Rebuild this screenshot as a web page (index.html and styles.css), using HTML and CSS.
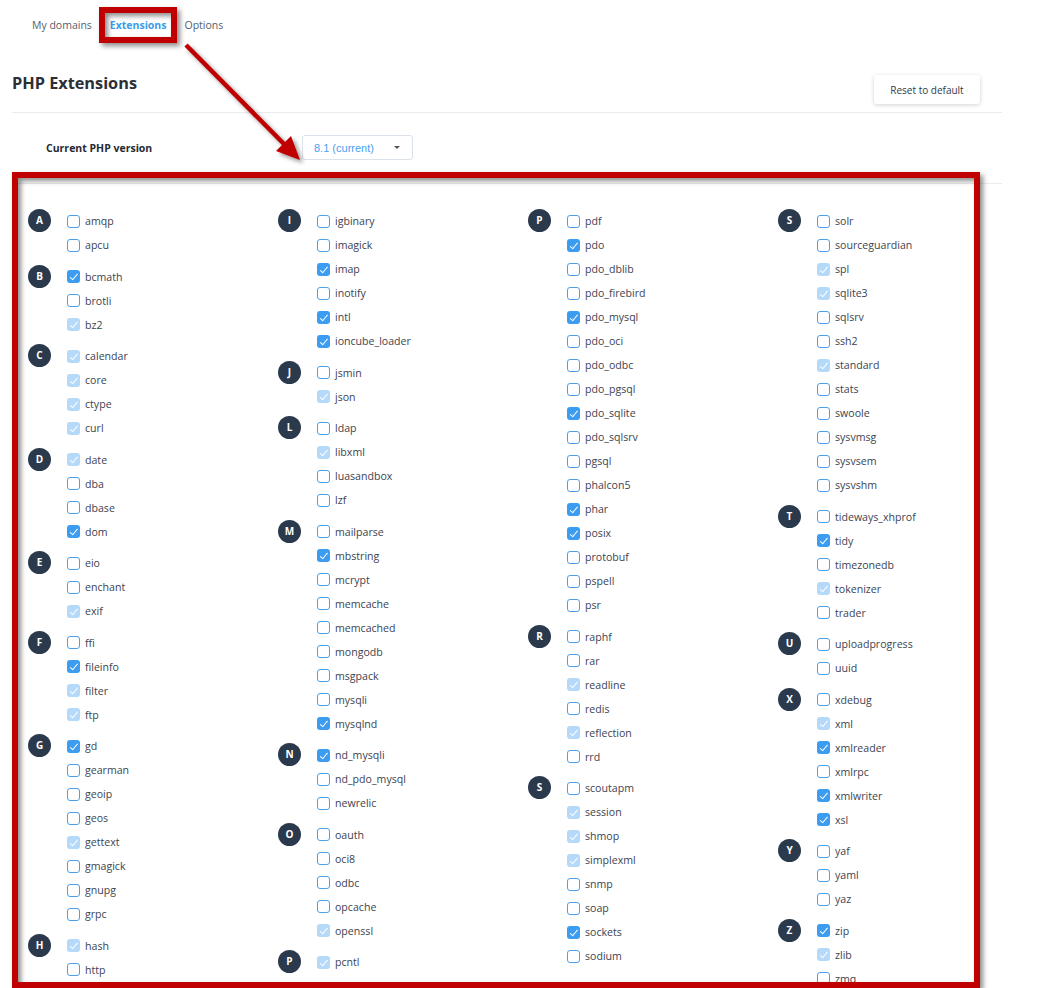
FILE: index.html
```html
<!DOCTYPE html>
<html lang="en">
<head>
<meta charset="utf-8">
<title>PHP Extensions</title>
<link rel="stylesheet" href="styles.css">
</head>
<body>
<nav class="tabs">
  <a class="tab">My domains</a>
  <a class="tab active">Extensions</a>
  <a class="tab">Options</a>
</nav>

<main class="page">
  <header class="page-head">
    <h1 class="title">PHP Extensions</h1>
    <button class="btn-reset">Reset to default</button>
  </header>

  <section class="version-row">
    <span class="version-label">Current PHP version</span>
    <div class="select"><span class="select-value">8.1 (current)</span><span class="caret"></span></div>
  </section>

  <section class="ext-grid">
    <div class="col">
      <div class="group"><span class="badge">A</span><div class="items">
        <label class="ext"><span class="cb"></span>amqp</label>
        <label class="ext"><span class="cb"></span>apcu</label>
      </div></div>
      <div class="group"><span class="badge">B</span><div class="items">
        <label class="ext"><span class="cb on"></span>bcmath</label>
        <label class="ext"><span class="cb"></span>brotli</label>
        <label class="ext"><span class="cb dis"></span>bz2</label>
      </div></div>
      <div class="group"><span class="badge">C</span><div class="items">
        <label class="ext"><span class="cb dis"></span>calendar</label>
        <label class="ext"><span class="cb dis"></span>core</label>
        <label class="ext"><span class="cb dis"></span>ctype</label>
        <label class="ext"><span class="cb dis"></span>curl</label>
      </div></div>
      <div class="group"><span class="badge">D</span><div class="items">
        <label class="ext"><span class="cb dis"></span>date</label>
        <label class="ext"><span class="cb"></span>dba</label>
        <label class="ext"><span class="cb"></span>dbase</label>
        <label class="ext"><span class="cb on"></span>dom</label>
      </div></div>
      <div class="group"><span class="badge">E</span><div class="items">
        <label class="ext"><span class="cb"></span>eio</label>
        <label class="ext"><span class="cb"></span>enchant</label>
        <label class="ext"><span class="cb dis"></span>exif</label>
      </div></div>
      <div class="group"><span class="badge">F</span><div class="items">
        <label class="ext"><span class="cb"></span>ffi</label>
        <label class="ext"><span class="cb on"></span>fileinfo</label>
        <label class="ext"><span class="cb dis"></span>filter</label>
        <label class="ext"><span class="cb dis"></span>ftp</label>
      </div></div>
      <div class="group"><span class="badge">G</span><div class="items">
        <label class="ext"><span class="cb on"></span>gd</label>
        <label class="ext"><span class="cb"></span>gearman</label>
        <label class="ext"><span class="cb"></span>geoip</label>
        <label class="ext"><span class="cb"></span>geos</label>
        <label class="ext"><span class="cb dis"></span>gettext</label>
        <label class="ext"><span class="cb"></span>gmagick</label>
        <label class="ext"><span class="cb"></span>gnupg</label>
        <label class="ext"><span class="cb"></span>grpc</label>
      </div></div>
      <div class="group"><span class="badge">H</span><div class="items">
        <label class="ext"><span class="cb dis"></span>hash</label>
        <label class="ext"><span class="cb"></span>http</label>
      </div></div>
    </div>

    <div class="col">
      <div class="group"><span class="badge">I</span><div class="items">
        <label class="ext"><span class="cb"></span>igbinary</label>
        <label class="ext"><span class="cb"></span>imagick</label>
        <label class="ext"><span class="cb on"></span>imap</label>
        <label class="ext"><span class="cb"></span>inotify</label>
        <label class="ext"><span class="cb on"></span>intl</label>
        <label class="ext"><span class="cb on"></span>ioncube_loader</label>
      </div></div>
      <div class="group"><span class="badge">J</span><div class="items">
        <label class="ext"><span class="cb"></span>jsmin</label>
        <label class="ext"><span class="cb dis"></span>json</label>
      </div></div>
      <div class="group"><span class="badge">L</span><div class="items">
        <label class="ext"><span class="cb"></span>ldap</label>
        <label class="ext"><span class="cb dis"></span>libxml</label>
        <label class="ext"><span class="cb"></span>luasandbox</label>
        <label class="ext"><span class="cb"></span>lzf</label>
      </div></div>
      <div class="group"><span class="badge">M</span><div class="items">
        <label class="ext"><span class="cb"></span>mailparse</label>
        <label class="ext"><span class="cb on"></span>mbstring</label>
        <label class="ext"><span class="cb"></span>mcrypt</label>
        <label class="ext"><span class="cb"></span>memcache</label>
        <label class="ext"><span class="cb"></span>memcached</label>
        <label class="ext"><span class="cb"></span>mongodb</label>
        <label class="ext"><span class="cb"></span>msgpack</label>
        <label class="ext"><span class="cb"></span>mysqli</label>
        <label class="ext"><span class="cb on"></span>mysqlnd</label>
      </div></div>
      <div class="group"><span class="badge">N</span><div class="items">
        <label class="ext"><span class="cb on"></span>nd_mysqli</label>
        <label class="ext"><span class="cb"></span>nd_pdo_mysql</label>
        <label class="ext"><span class="cb"></span>newrelic</label>
      </div></div>
      <div class="group"><span class="badge">O</span><div class="items">
        <label class="ext"><span class="cb"></span>oauth</label>
        <label class="ext"><span class="cb"></span>oci8</label>
        <label class="ext"><span class="cb"></span>odbc</label>
        <label class="ext"><span class="cb"></span>opcache</label>
        <label class="ext"><span class="cb dis"></span>openssl</label>
      </div></div>
      <div class="group"><span class="badge">P</span><div class="items">
        <label class="ext"><span class="cb dis"></span>pcntl</label>
      </div></div>
    </div>

    <div class="col">
      <div class="group"><span class="badge">P</span><div class="items">
        <label class="ext"><span class="cb"></span>pdf</label>
        <label class="ext"><span class="cb on"></span>pdo</label>
        <label class="ext"><span class="cb"></span>pdo_dblib</label>
        <label class="ext"><span class="cb"></span>pdo_firebird</label>
        <label class="ext"><span class="cb on"></span>pdo_mysql</label>
        <label class="ext"><span class="cb"></span>pdo_oci</label>
        <label class="ext"><span class="cb"></span>pdo_odbc</label>
        <label class="ext"><span class="cb"></span>pdo_pgsql</label>
        <label class="ext"><span class="cb on"></span>pdo_sqlite</label>
        <label class="ext"><span class="cb"></span>pdo_sqlsrv</label>
        <label class="ext"><span class="cb"></span>pgsql</label>
        <label class="ext"><span class="cb"></span>phalcon5</label>
        <label class="ext"><span class="cb on"></span>phar</label>
        <label class="ext"><span class="cb on"></span>posix</label>
        <label class="ext"><span class="cb"></span>protobuf</label>
        <label class="ext"><span class="cb"></span>pspell</label>
        <label class="ext"><span class="cb"></span>psr</label>
      </div></div>
      <div class="group"><span class="badge">R</span><div class="items">
        <label class="ext"><span class="cb"></span>raphf</label>
        <label class="ext"><span class="cb"></span>rar</label>
        <label class="ext"><span class="cb dis"></span>readline</label>
        <label class="ext"><span class="cb"></span>redis</label>
        <label class="ext"><span class="cb dis"></span>reflection</label>
        <label class="ext"><span class="cb"></span>rrd</label>
      </div></div>
      <div class="group"><span class="badge">S</span><div class="items">
        <label class="ext"><span class="cb"></span>scoutapm</label>
        <label class="ext"><span class="cb dis"></span>session</label>
        <label class="ext"><span class="cb dis"></span>shmop</label>
        <label class="ext"><span class="cb dis"></span>simplexml</label>
        <label class="ext"><span class="cb"></span>snmp</label>
        <label class="ext"><span class="cb"></span>soap</label>
        <label class="ext"><span class="cb on"></span>sockets</label>
        <label class="ext"><span class="cb"></span>sodium</label>
      </div></div>
    </div>

    <div class="col">
      <div class="group"><span class="badge">S</span><div class="items">
        <label class="ext"><span class="cb"></span>solr</label>
        <label class="ext"><span class="cb"></span>sourceguardian</label>
        <label class="ext"><span class="cb dis"></span>spl</label>
        <label class="ext"><span class="cb dis"></span>sqlite3</label>
        <label class="ext"><span class="cb"></span>sqlsrv</label>
        <label class="ext"><span class="cb"></span>ssh2</label>
        <label class="ext"><span class="cb dis"></span>standard</label>
        <label class="ext"><span class="cb"></span>stats</label>
        <label class="ext"><span class="cb"></span>swoole</label>
        <label class="ext"><span class="cb"></span>sysvmsg</label>
        <label class="ext"><span class="cb"></span>sysvsem</label>
        <label class="ext"><span class="cb"></span>sysvshm</label>
      </div></div>
      <div class="group"><span class="badge">T</span><div class="items">
        <label class="ext"><span class="cb"></span>tideways_xhprof</label>
        <label class="ext"><span class="cb on"></span>tidy</label>
        <label class="ext"><span class="cb"></span>timezonedb</label>
        <label class="ext"><span class="cb dis"></span>tokenizer</label>
        <label class="ext"><span class="cb"></span>trader</label>
      </div></div>
      <div class="group"><span class="badge">U</span><div class="items">
        <label class="ext"><span class="cb"></span>uploadprogress</label>
        <label class="ext"><span class="cb"></span>uuid</label>
      </div></div>
      <div class="group"><span class="badge">X</span><div class="items">
        <label class="ext"><span class="cb"></span>xdebug</label>
        <label class="ext"><span class="cb dis"></span>xml</label>
        <label class="ext"><span class="cb on"></span>xmlreader</label>
        <label class="ext"><span class="cb"></span>xmlrpc</label>
        <label class="ext"><span class="cb on"></span>xmlwriter</label>
        <label class="ext"><span class="cb on"></span>xsl</label>
      </div></div>
      <div class="group"><span class="badge">Y</span><div class="items">
        <label class="ext"><span class="cb"></span>yaf</label>
        <label class="ext"><span class="cb"></span>yaml</label>
        <label class="ext"><span class="cb"></span>yaz</label>
      </div></div>
      <div class="group"><span class="badge">Z</span><div class="items">
        <label class="ext"><span class="cb on"></span>zip</label>
        <label class="ext"><span class="cb dis"></span>zlib</label>
        <label class="ext"><span class="cb"></span>zmq</label>
      </div></div>
    </div>
  </section>
</main>

<!-- annotation overlays -->
<div class="mark mark-tab"></div>
<svg class="arrow" width="320" height="170" viewBox="0 0 320 170">
  <line x1="186" y1="45" x2="286" y2="146" stroke="#c00000" stroke-width="4.5"/>
  <polygon points="300,160 276,151 291,136" fill="#c00000"/>
</svg>
<div class="mark mark-frame"></div>
</body>
</html>
```

FILE: styles.css
```css
html, body {
  margin: 0;
  padding: 0;
  background: #ffffff;
}
body {
  font-family: "Open Sans", "Noto Sans", "Liberation Sans", sans-serif;
  color: #3d4451;
  position: relative;
  height: 988px;
  overflow: hidden;
}

/* tabs */
.tabs {
  display: flex;
  gap: 18px;
  padding: 17px 0 0 32px;
  height: 33px;
  box-sizing: border-box;
}
.tab {
  font-size: 10.5px;
  line-height: 16px;
  color: #55606e;
}
.tab.active {
  color: #3b9cea;
  font-weight: 700;
}

/* page */
.page {
  margin: 0 42px 0 12px;
}
.page-head {
  display: flex;
  justify-content: space-between;
  align-items: flex-start;
  padding-top: 37px;
  height: 80px;
  box-sizing: border-box;
  border-bottom: 1px solid #e9ebee;
}
.title {
  margin: 1px 0 0;
  font-size: 16.3px;
  line-height: 24px;
  font-weight: 700;
  color: #2b2f36;
}
.btn-reset {
  margin: 5px 22px 0 0;
  width: 106px;
  height: 29px;
  border: none;
  border-radius: 3px;
  background: #fff;
  box-shadow: 0 1px 4px rgba(0, 0, 0, 0.18);
  font-family: inherit;
  font-size: 10px;
  color: #333a44;
  padding: 0;
}

.version-row {
  display: flex;
  align-items: center;
  padding: 22px 0 23px 34px;
  border-bottom: 1px solid #e9ebee;
}
.version-label {
  width: 256px;
  font-size: 10.5px;
  font-weight: 700;
  color: #262a30;
}
.select {
  width: 111px;
  height: 25px;
  box-sizing: border-box;
  border: 1px solid #dbe2ea;
  border-radius: 3px;
  display: flex;
  align-items: center;
  justify-content: space-between;
  padding: 0 12px 0 11px;
}
.select-value {
  font-family: "Liberation Sans", Arial, sans-serif;
  font-size: 11px;
  color: #4a9ff0;
}
.caret {
  width: 0;
  height: 0;
  border-left: 3.5px solid transparent;
  border-right: 3.5px solid transparent;
  border-top: 3.5px solid #555;
}

/* extension grid */
.ext-grid {
  display: grid;
  grid-template-columns: repeat(4, 250px);
  padding: 25px 0 0 16px;
}
.col {
  display: flex;
  flex-direction: column;
  gap: 7.5px;
}
.group {
  display: flex;
  align-items: flex-start;
}
.badge {
  flex: 0 0 23px;
  width: 23px;
  height: 23px;
  border-radius: 50%;
  background: #2a3a4c;
  color: #fff;
  font-size: 10px;
  font-weight: 700;
  line-height: 23px;
  text-align: center;
}
.items {
  display: flex;
  flex-direction: column;
  margin-left: 16px;
}
.ext {
  display: flex;
  align-items: center;
  gap: 5px;
  height: 24px;
  font-size: 10.6px;
  color: #3d4451;
  white-space: nowrap;
}
.cb {
  position: relative;
  flex: 0 0 13px;
  width: 13px;
  height: 13px;
  box-sizing: border-box;
  border: 1.3px solid #4ba0e8;
  border-radius: 3px;
  background: #fff;
}
.cb.on,
.cb.dis {
  border: none;
  background: #3c9cf0;
}
.cb.dis {
  background: #b5d9f8;
}
.cb.on::after,
.cb.dis::after {
  content: "";
  position: absolute;
  left: 4.5px;
  top: 2px;
  width: 3px;
  height: 6.5px;
  border-right: 1.2px solid #fff;
  border-bottom: 1.2px solid #fff;
  transform: rotate(40deg);
}

/* annotation overlays */
.mark {
  position: absolute;
  box-sizing: border-box;
  border: 6px solid #c00000;
  box-shadow: 3px 3px 5px rgba(0, 0, 0, 0.45), inset 3px 3px 5px rgba(0, 0, 0, 0.45);
  pointer-events: none;
}
.mark-tab {
  left: 99px;
  top: 7px;
  width: 78px;
  height: 36px;
}
.mark-frame {
  left: 12px;
  top: 172px;
  width: 968px;
  height: 816px;
}
.arrow {
  position: absolute;
  left: 0;
  top: 0;
  filter: drop-shadow(3px 3px 2px rgba(0, 0, 0, 0.4));
  pointer-events: none;
}
```
